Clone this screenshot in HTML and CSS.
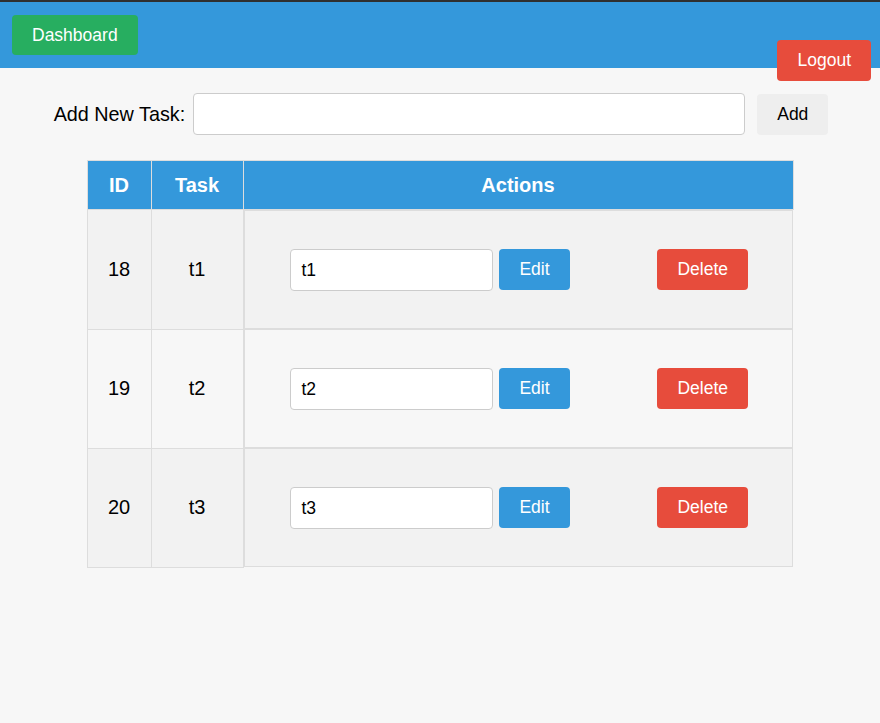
FILE: index.html
```html
<!DOCTYPE html>
<html>
<head>
<meta charset="utf-8">
<title>Tasks</title>
<link rel="stylesheet" href="styles.css">
</head>
<body>
<header class="topbar">
  <button class="btn btn-green">Dashboard</button>
</header>
<button class="btn btn-red logout">Logout</button>
<main>
  <form class="add-form">
    <label class="add-label">Add New Task:</label>
    <input class="add-input" type="text">
    <button class="btn btn-grey add-btn" type="button">Add</button>
  </form>
  <table class="tasks">
    <thead>
      <tr>
        <th class="col-id">ID</th>
        <th class="col-task">Task</th>
        <th>Actions</th>
      </tr>
    </thead>
    <tbody>
      <tr class="shade">
        <td>18</td>
        <td>t1</td>
        <td class="actions">
          <div class="edit-form"><input class="edit-input" type="text" value="t1"><button class="btn btn-blue" type="button">Edit</button></div>
          <div><button class="btn btn-red" type="button">Delete</button></div>
        </td>
      </tr>
      <tr>
        <td>19</td>
        <td>t2</td>
        <td class="actions">
          <div class="edit-form"><input class="edit-input" type="text" value="t2"><button class="btn btn-blue" type="button">Edit</button></div>
          <div><button class="btn btn-red" type="button">Delete</button></div>
        </td>
      </tr>
      <tr class="shade">
        <td>20</td>
        <td>t3</td>
        <td class="actions">
          <div class="edit-form"><input class="edit-input" type="text" value="t3"><button class="btn btn-blue" type="button">Edit</button></div>
          <div><button class="btn btn-red" type="button">Delete</button></div>
        </td>
      </tr>
    </tbody>
  </table>
</main>
</body>
</html>
```
FILE: styles.css
```css
* { box-sizing: border-box; }
body {
  margin: 0;
  background: #f7f7f7;
  font-family: "Liberation Sans", Arial, sans-serif;
  color: #000;
}
.topbar {
  background: #3498db;
  border-top: 2px solid #2f2f2f;
  padding: 13px 12px;
  height: 68px;
}
.btn {
  font-family: "Liberation Sans", Arial, sans-serif;
  font-size: 17.5px;
  border: none;
  border-radius: 4px;
  padding: 0 20px;
  height: 41px;
  line-height: 41px;
  cursor: pointer;
}
.btn-green { background: #27ae60; color: #fff; height: 40px; line-height: 40px; }
.btn-red { background: #e74c3c; color: #fff; }
.btn-blue { background: #3498db; color: #fff; }
.btn-grey { background: #eeeeee; color: #000; }
.logout {
  position: absolute;
  top: 40px;
  right: 9px;
}
.add-form {
  display: flex;
  justify-content: center;
  align-items: center;
  margin: 25px 0 0;
  padding-left: 2px;
}
.add-label {
  font-size: 19.8px;
  margin-right: 8px;
}
.add-input {
  width: 552px;
  height: 42px;
  border: 1px solid #ccc;
  border-radius: 4px;
  background: #fff;
  font-size: 17.5px;
  padding: 0 10px;
}
.add-btn { margin-left: 12px; }
.tasks {
  width: 707px;
  margin: 25px auto 0;
  border-collapse: collapse;
}
.tasks th {
  background: #3498db;
  color: #fff;
  font-size: 20px;
  font-weight: bold;
  padding: 12.5px 12px;
  border: 1px solid #ddd;
  text-align: center;
}
.col-id { width: 64px; }
.col-task { width: 92px; }
.tasks td {
  border: 1px solid #ddd;
  text-align: center;
  font-size: 20px;
  padding: 12px;
}
.tasks tr.shade { background: #f2f2f2; }
.tasks td.actions {
  display: flex;
  justify-content: space-around;
  align-items: flex-start;
  padding: 38px 0 37px 2px;
}
.edit-form {
  display: flex;
  align-items: flex-start;
  gap: 6px;
}
.edit-input {
  width: 203px;
  height: 42px;
  border: 1px solid #ccc;
  border-radius: 4px;
  background: #fff;
  font-family: "Liberation Sans", Arial, sans-serif;
  font-size: 17.5px;
  padding: 0 10px;
  color: #000;
}
```
